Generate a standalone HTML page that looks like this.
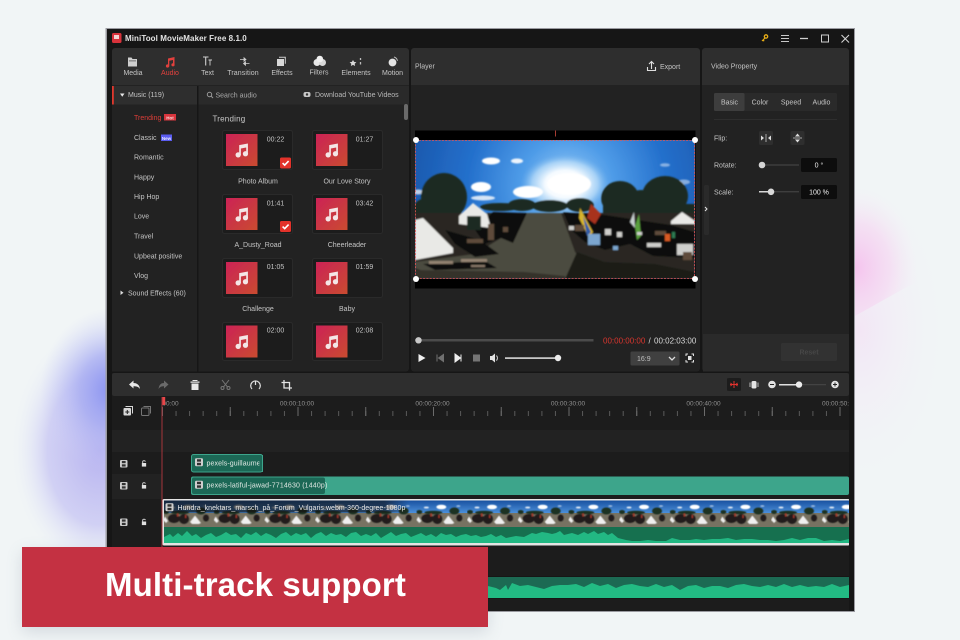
<!DOCTYPE html>
<html><head><meta charset="utf-8"><title>Multi-track support</title>
<style>
html,body{margin:0;padding:0;width:960px;height:640px;overflow:hidden;background:#f1f5f6}
svg{display:block;position:absolute;left:0;top:0}
text{font-family:"Liberation Sans",sans-serif;font-size:7px;fill:#c4c4c4}
.m{text-anchor:middle}
</style></head><body>
<svg width="960" height="640" viewBox="0 0 960 640" xmlns="http://www.w3.org/2000/svg">
<defs>
<radialGradient id="gb"><stop offset="0" stop-color="#8790f0"/><stop offset=".45" stop-color="#a3a9f2" stop-opacity=".7"/><stop offset="1" stop-color="#cfd2f6" stop-opacity="0"/></radialGradient>
<radialGradient id="gl"><stop offset="0" stop-color="#b6b2f0"/><stop offset=".6" stop-color="#c6c4f3" stop-opacity=".75"/><stop offset="1" stop-color="#e8eefa" stop-opacity="0"/></radialGradient>
<radialGradient id="gp"><stop offset="0" stop-color="#f5c4ee"/><stop offset=".55" stop-color="#f5d8f2" stop-opacity=".7"/><stop offset="1" stop-color="#f5eaf5" stop-opacity="0"/></radialGradient>
<radialGradient id="gp2"><stop offset="0" stop-color="#f3e6f5"/><stop offset="1" stop-color="#f1f2f7" stop-opacity="0"/></radialGradient>
<linearGradient id="th" x1="0" y1="0" x2="1" y2="1"><stop offset="0" stop-color="#cc2356"/><stop offset="1" stop-color="#c94b30"/></linearGradient>
<radialGradient id="sky" gradientUnits="userSpaceOnUse" cx="152" cy="46" r="165"><stop offset="0" stop-color="#9ccdf6"/><stop offset=".28" stop-color="#4f9ce8"/><stop offset=".6" stop-color="#2470cc"/><stop offset="1" stop-color="#1a56aa"/></radialGradient>
<radialGradient id="sun"><stop offset="0" stop-color="#fff"/><stop offset=".45" stop-color="#f6fbff"/><stop offset=".75" stop-color="#bfe0fa" stop-opacity=".7"/><stop offset="1" stop-color="#6fb2ee" stop-opacity="0"/></radialGradient>
<linearGradient id="ssky" x1="0" y1="0" x2="0" y2="1"><stop offset="0" stop-color="#174f9e"/><stop offset="1" stop-color="#4f94de"/></linearGradient>
<linearGradient id="lbl" x1="0" y1="0" x2="1" y2="0"><stop offset="0" stop-color="#141414" stop-opacity=".7"/><stop offset=".9" stop-color="#141414" stop-opacity=".6"/><stop offset="1" stop-color="#141414" stop-opacity="0"/></linearGradient>
<filter id="b1" x="-5%" y="-5%" width="110%" height="110%"><feGaussianBlur stdDeviation=".38"/></filter>
<filter id="b2" x="-5%" y="-5%" width="110%" height="110%"><feGaussianBlur stdDeviation=".7"/></filter>
<filter id="b3" x="-5%" y="-5%" width="110%" height="110%"><feGaussianBlur stdDeviation=".45"/></filter>
<filter id="sh" x="-10%" y="-20%" width="120%" height="150%"><feGaussianBlur stdDeviation="8"/></filter>
<clipPath id="pc"><polygon points="854,150 960,150 960,262 905,288 855,316"/></clipPath>

<symbol id="scene" viewBox="0 0 280 139" preserveAspectRatio="none">
<rect width="280" height="139" fill="url(#sky)"/>
<g filter="url(#b2)">
<ellipse cx="150" cy="44" rx="44" ry="30" fill="url(#sun)"/>
<g fill="#fff"><ellipse cx="154" cy="44" rx="22" ry="11"/><ellipse cx="113" cy="52" rx="15" ry="6"/><ellipse cx="66" cy="47" rx="10" ry="5"/><ellipse cx="76" cy="21" rx="9" ry="3.500"/><ellipse cx="102" cy="21" rx="6" ry="2.500" opacity=".9"/><ellipse cx="68" cy="58" rx="12" ry="2.500" opacity=".8"/><ellipse cx="250" cy="25" rx="5" ry="1.800" opacity=".45"/><ellipse cx="269" cy="42" rx="6" ry="2.500" opacity=".45"/><ellipse cx="3" cy="52" rx="5" ry="2.500" opacity=".7"/></g>
<g fill="#1b2a20"><ellipse cx="29" cy="57" rx="23" ry="24"/><ellipse cx="12" cy="70" rx="14" ry="12"/><ellipse cx="85" cy="67" rx="20" ry="4"/><ellipse cx="107" cy="65" rx="14" ry="6"/><ellipse cx="135" cy="66" rx="18" ry="6"/><ellipse cx="165" cy="65" rx="14" ry="7"/><ellipse cx="205" cy="58" rx="19" ry="17"/><ellipse cx="250" cy="56" rx="23" ry="20"/><ellipse cx="226" cy="62" rx="14" ry="12"/><rect x="188" y="64" width="92" height="14"/></g>
<rect y="73" width="280" height="66" fill="#2a2823"/>
<polygon points="112,73 146,73 160,112 175,128 160,139 30,139 0,128 0,122 60,114 96,92" fill="#4b4b3f"/>
<polygon points="162,112 190,122 240,124 280,132 280,139 150,139" fill="#1c1c19"/>
<polygon points="0,130 110,132 150,136 150,139 0,139" fill="#35312a"/>
<g fill="#0f0f0f"><polygon points="78,72 112,73 104,90 98,103 86,98 70,104 60,90"/><polygon points="148,72 190,75 256,85 280,92 280,118 238,116 215,104 190,110 170,102 156,90"/><polygon points="30,90 65,100 84,114 60,117 40,104"/><polygon points="8,124 70,121 82,128 20,130"/></g>
<g fill="#e9e9e6"><polygon points="0,80 8,78 38,108 38,113 0,120"/><polygon points="44,76 58,63 72,74 76,88 44,84"/><polygon points="256,81 267,72 280,81 280,84 256,84"/></g>
<polygon points="52,76 66,76 66,90 52,90" fill="#1b2a24"/>
<g><polygon points="172,78 176,64 186,74 180,84" fill="#a8311c"/><polygon points="165,68 178,92 174,98 164,78" fill="#d9b52c"/><polygon points="168,76 176,92 172,96" fill="#2d5ca8"/><polygon points="220,86 224,74 226,96 222,100" fill="#5aa03e"/><polygon points="215,82 219,72 220,88" fill="#c8d0d0"/></g>
<g fill="#7ba6cf"><rect x="173" y="94" width="12" height="11"/><rect x="198" y="106" width="5" height="4"/></g>
<g fill="#cfcfcc"><rect x="190" y="89" width="6" height="6"/><rect x="202" y="92" width="5" height="5"/><rect x="232" y="103" width="14" height="4"/><rect x="262" y="104" width="16" height="11"/><rect x="154" y="86" width="5" height="4"/><rect x="222" y="92" width="5" height="3"/></g>
<g fill="#5f4c3a"><rect x="73" y="84" width="6" height="16"/><rect x="52" y="99" width="16" height="4"/><rect x="160" y="85" width="9" height="6"/><rect x="240" y="91" width="11" height="4"/><rect x="88" y="87" width="5" height="5"/><rect x="268" y="112" width="9" height="8"/></g>
<g fill="#d85a22"><rect x="250" y="94" width="5" height="7"/><rect x="257" y="92" width="3" height="6" fill="#2f7d52"/></g>
<g fill="#a89480" opacity=".8"><rect x="14" y="121" width="24" height="3"/><rect x="46" y="119" width="26" height="3"/><rect x="56" y="125" width="14" height="2"/></g>
</g>
</symbol>

<symbol id="strip" viewBox="0 0 50.670 27" preserveAspectRatio="none">
<rect width="50.670" height="14" fill="url(#ssky)"/>
<rect y="13" width="50.670" height="14" fill="#777262"/>
<g filter="url(#b3)">
<g fill="#fff"><ellipse cx="25" cy="7" rx="5" ry="2.300"/><ellipse cx="10" cy="7.500" rx="2.500" ry="1" opacity=".8"/><ellipse cx="42" cy="6" rx="2" ry=".8" opacity=".6"/></g>
<g fill="#1f3024"><ellipse cx="38" cy="11" rx="5" ry="3.500"/><ellipse cx="17" cy="12.500" rx="9" ry="1.800"/><ellipse cx="3" cy="12" rx="3" ry="2"/></g>
<g fill="#211e1b"><ellipse cx="11" cy="18.500" rx="6" ry="4.500"/><ellipse cx="21" cy="19" rx="5" ry="5"/><ellipse cx="43" cy="18" rx="3" ry="3.500"/></g>
<g fill="#efefef"><polygon points="27,22 32,15.500 38,23 36,24 29,24"/><polygon points="0,20 2,16.500 5,21 3,23"/></g>
<g fill="#a83a2c"><rect x="14" y="13.500" width="1.500" height="3"/><rect x="22" y="15" width="1.300" height="3"/></g>
</g>
</symbol>

<pattern id="film" x="163" y="500" width="50.670" height="27" patternUnits="userSpaceOnUse"><use href="#strip" width="50.670" height="27"/></pattern>

<symbol id="note" viewBox="0 0 16 16"><path d="M5 2.800 14.300 1V12.200H12.500V5.300L6.800 6.400V13.400H5Z" fill="#f4e6e6"/><circle cx="3.900" cy="13.200" r="2.800" fill="#f4e6e6"/><circle cx="11.700" cy="12" r="2.800" fill="#f4e6e6"/></symbol>
<symbol id="chk" viewBox="0 0 11 11"><rect width="11" height="11" rx="1.500" fill="#e3332c"/><path d="M2.600 5.600 4.700 7.600 8.600 3.600" fill="none" stroke="#fff" stroke-width="1.600"/></symbol>
<symbol id="fr" viewBox="0 0 8 8"><rect width="8" height="8" rx="1.200" fill="#cfcfcf"/><rect x="2" y="1" width="4" height="2.400" fill="#333"/><rect x="2" y="4.600" width="4" height="2.400" fill="#333"/></symbol>
<symbol id="lock" viewBox="0 0 7 8"><path d="M1 3.400H6V7.600H1Z" fill="#e0e0e0"/><path d="M2 3.400V1.800C2 .4 5 .4 5 1.800" fill="none" stroke="#e0e0e0"/></symbol>
</defs>

<!-- page background -->
<rect width="960" height="640" fill="#f1f5f6"/>
<ellipse cx="100" cy="450" rx="88" ry="125" fill="url(#gl)"/>
<ellipse cx="112" cy="390" rx="72" ry="82" fill="url(#gb)"/>
<ellipse cx="860" cy="330" rx="85" ry="150" fill="url(#gp2)"/>
<g clip-path="url(#pc)"><ellipse cx="856" cy="268" rx="62" ry="80" fill="url(#gp)"/></g>
<rect x="22" y="552" width="466" height="80" fill="#5a6a80" opacity=".2" filter="url(#sh)"/>

<g filter="url(#b1)">
<!-- window -->
<rect x="105.500" y="28" width="749.500" height="584" fill="#9a9aa0"/>
<rect x="107" y="29" width="747" height="582" fill="#131313"/>
<rect x="112" y="48" width="297" height="323.500" rx="3" fill="#232323"/>
<rect x="411" y="48" width="289" height="323.500" rx="3" fill="#232323"/>
<rect x="702" y="48" width="147" height="323.500" rx="3" fill="#232323"/>

<!-- title bar -->
<rect x="112" y="33" width="9.500" height="10" rx="1.500" fill="#d8333a"/><rect x="114" y="35" width="5" height="4" fill="#f3d3d3"/>
<text x="125" y="41" style="font-size:8px;font-weight:bold;letter-spacing:.08px;fill:#e4e4e4">MiniTool MovieMaker Free 8.1.0</text>
<circle cx="766" cy="36.500" r="1.700" fill="none" stroke="#e8ae14" stroke-width="1.300"/><path d="M765 38 762 41M763 40 764.200 41.200" stroke="#e8ae14" stroke-width="1.200" fill="none"/>
<path d="M781 35.500h8M781 38.500h8M781 41.500h8" stroke="#c8c8c8" stroke-width="1.100"/>
<path d="M800 38.500h8" stroke="#d0d0d0" stroke-width="1.300"/>
<rect x="821.500" y="35" width="7" height="7" fill="none" stroke="#cfcfcf"/>
<path d="M841.500 35 849 42.500M849 35 841.500 42.500" stroke="#d4d4d4" stroke-width="1.100"/>

<!-- left top tabs -->
<path d="M112 85V51a3 3 0 0 1 3-3H406a3 3 0 0 1 3 3V85Z" fill="#2e2e2e"/>
<path d="M128 57.500h3.500l1 1.500h4.500v7.500h-9Z" fill="#cfcfcf"/><rect x="129" y="60.500" width="7" height=".8" fill="#555"/>
<path d="M168 58.500 174.500 57V65H173V60L169.300 60.800V66.500H168Z" fill="#e2413d"/><circle cx="167.500" cy="66" r="1.600" fill="#e2413d"/><circle cx="173" cy="64.800" r="1.600" fill="#e2413d"/>
<path d="M203 57h5.500M205.700 57v8.500" stroke="#cfcfcf" stroke-width="1.100"/><path d="M208.500 60h3.500M210 60v5.500" stroke="#cfcfcf" stroke-width=".9"/>
<path d="M240 59.500h6M246 59.500l-2-1.700v3.400ZM249.500 63.500h-6M243.500 63.500l2-1.700v3.400Z" fill="#cfcfcf" stroke="#cfcfcf" stroke-width=".8"/>
<rect x="277" y="59" width="7" height="7" fill="#d8d8d8"/><path d="M279 57.300h6.300v6.500" fill="none" stroke="#cfcfcf"/>
<circle cx="317" cy="62.500" r="3.500" fill="#e8e8e8"/><circle cx="322.500" cy="62.500" r="3.500" fill="#d8d8d8"/><circle cx="319.800" cy="59" r="3.300" fill="#f0f0f0"/>
<path d="M353 60l1.100 1.900 2.300.3-1.700 1.500.4 2.300-2.100-1.100-2.100 1.100.4-2.300-1.700-1.500 2.300-.3Z" fill="#d8d8d8"/><path d="M360.500 58v2M360.500 62v2.500" stroke="#bbb" stroke-width="1.300"/>
<circle cx="392.500" cy="62.500" r="3.900" fill="#e4e4e4"/><path d="M394 57a5 5 0 0 1 3.500 3.800" fill="none" stroke="#bbb"/>
<text x="133" y="75" class="m">Media</text>
<text x="170" y="75" class="m" style="fill:#e2413d">Audio</text>
<text x="207.500" y="75" class="m">Text</text>
<text x="243" y="75" class="m" style="letter-spacing:.1px">Transition</text>
<text x="282" y="75" class="m">Effects</text>
<text x="319" y="74.500" class="m">Filters</text>
<text x="356" y="75" class="m">Elements</text>
<text x="392.500" y="75" class="m">Motion</text>

<!-- sidebar -->
<rect x="112" y="104" width="85" height="267.500" fill="#232323"/>
<rect x="112" y="86" width="85" height="18.500" fill="#2d2d2d"/>
<rect x="112" y="86" width="1.800" height="18.500" fill="#e0392e"/>
<path d="M120 93.500h4.500l-2.250 3.200Z" fill="#e8e8e8"/>
<text x="128" y="97">Music (119)</text>
<rect x="197" y="86" width="1.500" height="285.500" fill="#161616"/>
<text x="134" y="120" style="fill:#dd3d38">Trending</text>
<rect x="164" y="114" width="12" height="6.500" fill="#d8343c"/><text x="170" y="119.500" class="m" style="font-size:4.500px;fill:#f4dede;font-weight:bold">Hot</text>
<text x="134" y="140">Classic</text>
<rect x="161" y="134.500" width="11" height="6.500" fill="#5a5cf0"/><text x="166.500" y="140" class="m" style="font-size:4.500px;fill:#e8e8ff;font-weight:bold">New</text>
<text x="134" y="159.500">Romantic</text>
<text x="134" y="179.500">Happy</text>
<text x="134" y="199">Hip Hop</text>
<text x="134" y="218.500">Love</text>
<text x="134" y="238.500">Travel</text>
<text x="134" y="258.500">Upbeat positive</text>
<text x="134" y="278">Vlog</text>
<path d="M120.500 290.500v4.500l3-2.250Z" fill="#dcdcdc"/>
<text x="128" y="295.500">Sound Effects (60)</text>

<!-- audio library -->
<rect x="198.500" y="86" width="210.500" height="18.500" fill="#2a2a2a"/>
<circle cx="209.500" cy="94.500" r="2.200" fill="none" stroke="#9a9a9a"/><path d="M211 96 213 98" stroke="#9a9a9a"/>
<text x="215.500" y="97.500" style="fill:#a8a8a8">Search audio</text>
<rect x="303.500" y="92" width="7" height="5" rx="2" fill="#c8c8c8"/><circle cx="307" cy="94.500" r="1.200" fill="#333"/>
<text x="315" y="97" style="fill:#b8b8b8">Download YouTube Videos</text>
<rect x="404" y="104" width="4" height="16" rx="2" fill="#6a6a6a"/>
<text x="212.500" y="121.500" style="font-size:8px;letter-spacing:.2px;fill:#c8c8c8">Trending</text>

<g fill="#1c1c1c" stroke="#2c2c2c">
<rect x="222.500" y="130.500" width="70" height="39" rx="2"/><rect x="312.500" y="130.500" width="70" height="39" rx="2"/>
<rect x="222.500" y="194.500" width="70" height="39" rx="2"/><rect x="312.500" y="194.500" width="70" height="39" rx="2"/>
<rect x="222.500" y="258.500" width="70" height="39" rx="2"/><rect x="312.500" y="258.500" width="70" height="39" rx="2"/>
<rect x="222.500" y="322.500" width="70" height="38" rx="2"/><rect x="312.500" y="322.500" width="70" height="38" rx="2"/>
</g>
<g fill="url(#th)">
<rect x="226" y="134" width="31.500" height="32"/><rect x="316" y="134" width="31.500" height="32"/>
<rect x="226" y="198" width="31.500" height="32"/><rect x="316" y="198" width="31.500" height="32"/>
<rect x="226" y="262" width="31.500" height="32"/><rect x="316" y="262" width="31.500" height="32"/>
<rect x="226" y="325.500" width="31.500" height="32"/><rect x="316" y="325.500" width="31.500" height="32"/>
</g>
<use href="#note" x="234.500" y="142.500" width="15" height="15"/><use href="#note" x="324.500" y="142.500" width="15" height="15"/>
<use href="#note" x="234.500" y="206.500" width="15" height="15"/><use href="#note" x="324.500" y="206.500" width="15" height="15"/>
<use href="#note" x="234.500" y="270.500" width="15" height="15"/><use href="#note" x="324.500" y="270.500" width="15" height="15"/>
<use href="#note" x="234.500" y="334" width="15" height="15"/><use href="#note" x="324.500" y="334" width="15" height="15"/>
<use href="#chk" x="280" y="157.500" width="11" height="11"/><use href="#chk" x="280" y="221" width="11" height="11"/>
<g style="text-anchor:middle">
<text x="275.500" y="141.500">00:22</text><text x="364.500" y="141.500">01:27</text>
<text x="275.500" y="205.500">01:41</text><text x="364.500" y="205.500">03:42</text>
<text x="275.500" y="269">01:05</text><text x="364.500" y="269">01:59</text>
<text x="275.500" y="332.500">02:00</text><text x="364.500" y="332.500">02:08</text>
<text x="258" y="183.500">Photo Album</text><text x="347" y="183.500">Our Love Story</text>
<text x="258" y="247">A_Dusty_Road</text><text x="347" y="247">Cheerleader</text>
<text x="258" y="311">Challenge</text><text x="347" y="311">Baby</text>
</g>

<!-- player -->
<path d="M411 85V51a3 3 0 0 1 3-3H697a3 3 0 0 1 3 3V85Z" fill="#2e2e2e"/>
<text x="415" y="68.500">Player</text>
<path d="M651.500 69V62M649 64l2.500-2.500L654 64M647.500 67v3.500h8V67" fill="none" stroke="#dedede" stroke-width="1.100"/>
<text x="660" y="69">Export</text>
<rect x="415" y="130.500" width="280.500" height="158" fill="#000"/>
<use href="#scene" x="415" y="140" width="280" height="139"/>
<rect x="415.500" y="140.500" width="279" height="138" fill="none" stroke="#e8564e" stroke-width=".8" stroke-dasharray="2 1.300"/>
<path d="M555.500 130.500v6" stroke="#a63a33"/>
<circle cx="416" cy="140" r="3" fill="#fff"/><circle cx="695" cy="140" r="3" fill="#fff"/><circle cx="416" cy="279" r="3" fill="#fff"/><circle cx="695" cy="279" r="3" fill="#fff"/>
<rect x="415" y="339" width="178.500" height="2.500" fill="#4c4c4c"/>
<circle cx="418.500" cy="340.300" r="3.200" fill="#c8c8c8"/>
<text x="603" y="343.500" style="font-size:8px;fill:#d8352e">00:00:00:00</text>
<text x="648.500" y="343.500" style="font-size:8px;fill:#d8d8d8">/</text>
<text x="654" y="343.500" style="font-size:8px;fill:#d8d8d8">00:02:03:00</text>
<path d="M418.500 354v8l7-4Z" fill="#f0f0f0"/>
<path d="M437 354.500v7M443.500 354.500v7l-5-3.500Z" stroke="#707070" fill="#707070"/>
<path d="M455 354v8l5.500-4ZM461 354.500v7" stroke="#eee" fill="#eee"/>
<rect x="473" y="354.500" width="7" height="7" fill="#757575"/>
<path d="M490 356h2l3-2.500v9L492 360h-2Z" fill="#e4e4e4"/><path d="M496.500 355.500a4 4 0 0 1 0 5" fill="none" stroke="#e4e4e4"/>
<rect x="505" y="357.300" width="53" height="1.600" fill="#d8d8d8"/><circle cx="558" cy="358" r="3.200" fill="#ececec"/>
<rect x="630.500" y="351.500" width="49" height="14" rx="1.500" fill="#404040"/>
<text x="637" y="361" style="fill:#bfbfbf">16:9</text>
<path d="M669 357l3 3 3-3" fill="none" stroke="#dcdcdc" stroke-width="1.300"/>
<path d="M686 356v-2h2M691.500 354h2v2M693.500 360v2h-2M688 362h-2v-2" fill="none" stroke="#e2e2e2"/><rect x="688" y="356" width="3.500" height="4" fill="#e2e2e2"/>
<rect x="704" y="185" width="5" height="50" rx="2" fill="#2c2c2c"/><path d="M705 207l2 2-2 2" fill="none" stroke="#e4e4e4"/>

<!-- property -->
<path d="M702 85V51a3 3 0 0 1 3-3H846a3 3 0 0 1 3 3V85Z" fill="#2e2e2e"/>
<text x="711" y="68.500">Video Property</text>
<rect x="714" y="93" width="123" height="18" rx="1.500" fill="#2a2a2a"/>
<rect x="714" y="93" width="30.500" height="18" rx="1.500" fill="#3e3e3e"/>
<text x="729.500" y="104.500" class="m">Basic</text><text x="760" y="104.500" class="m">Color</text><text x="791" y="104.500" class="m">Speed</text><text x="821.500" y="104.500" class="m">Audio</text>
<rect x="714" y="119" width="123" height="1" fill="#2f2f2f"/>
<text x="714" y="140.500">Flip:</text><text x="714" y="167.500">Rotate:</text><text x="714" y="194.500">Scale:</text>
<rect x="759" y="131" width="14" height="14" rx="1.500" fill="#2d2d2d"/><rect x="790.500" y="131" width="14" height="14" rx="1.500" fill="#2d2d2d"/>
<path d="M761 135.500v5l3-2.500ZM771 135.500v5l-3-2.500Z" fill="#ddd"/><path d="M766 134v8" stroke="#ddd" stroke-width=".7"/>
<path d="M795 136.500h5l-2.500-3ZM795 139.500h5l-2.500 3Z" fill="#ddd"/><path d="M793 138h9" stroke="#ddd" stroke-width=".7"/>
<rect x="759" y="164.500" width="40" height="1" fill="#4a4a4a"/><circle cx="762" cy="165" r="3.300" fill="#d4d4d4"/>
<rect x="801" y="158" width="36" height="14" rx="1" fill="#111"/><text x="819" y="167.500" class="m" style="fill:#e8e8e8">0 °</text>
<rect x="759" y="191.300" width="40" height="1" fill="#4a4a4a"/><rect x="759" y="191" width="12" height="1.500" fill="#d8d8d8"/><circle cx="771" cy="191.800" r="3.300" fill="#d8d8d8"/>
<rect x="801" y="185" width="36" height="14" rx="1" fill="#111"/><text x="819" y="194.500" class="m" style="fill:#efefef">100 %</text>
<rect x="703" y="334" width="146" height="37.500" fill="#2b2b2b"/>
<rect x="781" y="343" width="56" height="18" rx="1" fill="#313131"/><text x="809" y="354.500" class="m" style="fill:#474747;font-weight:bold">Reset</text>

<!-- timeline -->
<rect x="112" y="373" width="737" height="238" fill="#1b1b1b"/>
<rect x="112" y="373" width="737" height="23" rx="2" fill="#2d2d2d"/>
<path d="M129 384.500l4.500-4v2.500c3 0 6 1.500 6.500 6-1.500-2.300-3.500-2.800-6.500-2.800v2.300Z" fill="#e8e8e8"/>
<path d="M168.500 384.500l-4.500-4v2.500c-3 0-4.800 1.500-5.500 6 1.500-2.300 3-2.800 5.500-2.800v2.300Z" fill="#6a6a6a"/>
<path d="M190.500 381.500h9v1.200h-9ZM192.500 380h5v1h-5ZM191.500 383.500h7v6.500h-7Z" fill="#e8e8e8"/>
<path d="M222 380l5.500 7M229 380l-5.500 7" stroke="#777"/><circle cx="222.500" cy="388" r="1.500" fill="none" stroke="#777"/><circle cx="228.500" cy="388" r="1.500" fill="none" stroke="#777"/>
<path d="M252 389a4.800 4.800 0 1 1 7 0" fill="none" stroke="#e4e4e4" stroke-width="1.200"/><path d="M255.500 381.500v3.500" stroke="#e4e4e4" stroke-width="1.200"/>
<path d="M284 380v8h8M281.500 382.500h8v8" fill="none" stroke="#e4e4e4" stroke-width="1.300"/>
<rect x="727" y="378" width="14" height="13" rx="1.500" fill="#1f1f1f"/>
<path d="M730 384.500h8M734 381v7" stroke="#e0332e"/><path d="M730.500 382.500v4l2.500-2ZM737.500 382.500v4l-2.500-2Z" fill="#e0332e"/>
<rect x="751.500" y="381" width="5" height="7.500" rx="1.500" fill="#e4e4e4"/><path d="M750 382.500v4.500M758 382.500v4.500" stroke="#b8b8b8"/>
<circle cx="772" cy="384.500" r="3.800" fill="#e2e2e2"/><path d="M770 384.500h4" stroke="#222"/>
<rect x="779" y="384" width="20" height="1.500" fill="#e0e0e0"/><rect x="799" y="384.200" width="27" height="1" fill="#4a4a4a"/><circle cx="799" cy="384.600" r="3.200" fill="#ececec"/>
<circle cx="835" cy="384.500" r="3.800" fill="#e2e2e2"/><path d="M833 384.500h4M835 382.500v4" stroke="#222"/>

<!-- track backgrounds -->
<rect x="112" y="430" width="737" height="22" fill="#202020"/>
<rect x="112" y="452" width="50" height="22" fill="#1d1d1d"/>
<rect x="112" y="474" width="50" height="25" fill="#212121"/>
<rect x="112" y="499" width="50" height="48" fill="#1d1d1d"/>
<rect x="112" y="547" width="737" height="64" fill="#1f1f1f"/>
<rect x="112" y="576" width="737" height="23" fill="#141414"/>

<!-- ruler -->
<path d="M162 413.500H849" stroke="#5a5a5a" stroke-width="5" stroke-dasharray="1 12.550"/>
<path d="M162 411.500H849" stroke="#6c6c6c" stroke-width="9" stroke-dasharray="1 66.750" stroke-dashoffset="-67.750"/>
<g style="text-anchor:middle">
<text x="170.500" y="405.500" style="font-size:6.500px;fill:#929292">00:00</text>
<text x="297" y="405.500" style="font-size:6.500px;fill:#929292">00:00:10:00</text>
<text x="432.500" y="405.500" style="font-size:6.500px;fill:#929292">00:00:20:00</text>
<text x="568" y="405.500" style="font-size:6.500px;fill:#929292">00:00:30:00</text>
<text x="703.500" y="405.500" style="font-size:6.500px;fill:#929292">00:00:40:00</text>
</g>
<text x="822" y="405.500" style="font-size:6.500px;fill:#929292">00:00:50:0</text>

<!-- track add icons -->
<rect x="123.500" y="408" width="7.500" height="7.500" rx="1" fill="#d8d8d8"/><path d="M127.300 410v4M125.300 412h4" stroke="#222"/><path d="M125.500 406.500h7v7" fill="none" stroke="#d8d8d8"/>
<rect x="141.500" y="408" width="7.500" height="7.500" rx="1" fill="none" stroke="#757575"/><path d="M143.500 406.500h7v7" fill="none" stroke="#757575"/>

<!-- track header icons -->
<use href="#fr" x="120" y="460" width="7.500" height="7.500"/><use href="#lock" x="141" y="460" width="6" height="7"/>
<use href="#fr" x="120" y="482" width="7.500" height="7.500"/><use href="#lock" x="141" y="482" width="6" height="7"/>
<use href="#fr" x="120" y="518.500" width="7.500" height="7.500"/><use href="#lock" x="141" y="518.500" width="6" height="7"/>

<!-- clip 1 -->
<rect x="191.500" y="454.500" width="71" height="17.500" rx="2" fill="#1f6856" stroke="#3ea58c"/>
<use href="#fr" x="195" y="458" width="8" height="8.500"/>
<text x="206.500" y="465.500" style="fill:#dfe8e4;letter-spacing:.1px">pexels-guillaume</text>
<rect x="259.500" y="456" width="3" height="15" fill="#1f6856"/><rect x="262" y="455" width="1" height="17" fill="#3ea58c"/>
<!-- clip 2 -->
<rect x="191" y="476.500" width="658" height="18.500" rx="2" fill="#3ca58b"/>
<rect x="192" y="477.500" width="133" height="16.500" rx="2" fill="#1f6856"/>
<use href="#fr" x="195" y="480.500" width="8" height="8.500"/>
<text x="206.500" y="487.500" style="fill:#dfe8e4;letter-spacing:.16px">pexels-latiful-jawad-7714630 (1440p)</text>

<!-- main clip -->
<rect x="162.500" y="499" width="687" height="46.500" rx="1.500" fill="#e4e4e4"/>
<rect x="164" y="500.500" width="685" height="26.500" fill="url(#film)"/>
<rect x="164" y="500.500" width="245" height="12" fill="url(#lbl)"/>
<rect x="164" y="527" width="685" height="16" fill="#18704f"/>
<polygon fill="#22b883" points="164,543 164,537 170,534 173,537 178,533 182,536 187,531 192,536 196,534 201,538 206,535 211,533 216,537 221,535 226,532 231,535 236,534 241,538 246,533 251,535 256,532 261,536 266,533 271,535 276,538 281,534 286,532 291,536 296,533 301,535 306,533 311,538 316,534 321,532 326,536 331,533 336,535 341,534 346,537 351,533 356,532 361,536 366,534 371,536 376,533 381,538 386,535 391,532 396,536 401,534 406,533 411,537 416,535 421,533 426,536 431,534 436,537 441,533 446,535 451,534 456,537 461,535 466,534 471,536 476,535 481,537 486,536 491,534 496,537 501,535 506,538 516,536 524,537 532,533 536,534 542,532 548,533 552,534 556,533 560,531 564,535 572,533 578,535 584,532 588,534 594,531 598,534 604,532 608,535 612,533 618,538 626,540 632,541 640,541 648,540 656,541 666,541 672,538 680,540 690,540 696,539 704,540 712,539 720,539 728,538 736,540 744,539 752,539 760,540 768,540 776,541 784,540 792,538 800,540 808,538 816,538 824,541 832,540 840,541 849,539 849,543"/>

<!-- audio track -->
<rect x="112" y="577" width="737" height="21" fill="#1a6b53"/>
<polygon fill="#23bb83" points="488,598 488,586 496,588 500,590 506,585 508,590 512,583 520,586 528,585 536,587 544,589 552,586 560,585 568,585 576,584 584,587 592,583 600,586 608,584 616,588 624,585 632,584 640,586 648,587 656,584 664,587 672,585 680,590 688,586 696,585 704,588 712,586 720,586 728,588 736,585 744,584 752,586 760,587 768,585 776,587 784,584 792,587 800,585 808,587 816,586 824,587 832,584 840,587 849,585 849,598"/>
<!-- playhead -->
<rect x="162" y="397" width="3.200" height="8" fill="#e8464a"/>
<rect x="161.500" y="397" width="1" height="214" fill="#a5343a"/>
<text x="177.500" y="510" style="fill:#e8e8e8;letter-spacing:.04px">Hundra_knektars_marsch_på_Forum_Vulgaris.webm-360-degree-1080p</text>
<use href="#fr" x="165.500" y="503" width="8" height="8.500"/>
<rect x="849" y="396" width="5" height="215" fill="#131313"/>
</g>

<!-- banner -->
<rect x="22" y="547" width="466" height="80" fill="#c43142"/>
<text x="105" y="596" style="font-size:33px;font-weight:bold;fill:#fff;letter-spacing:.11px">Multi-track support</text>
</svg>
</body></html>
